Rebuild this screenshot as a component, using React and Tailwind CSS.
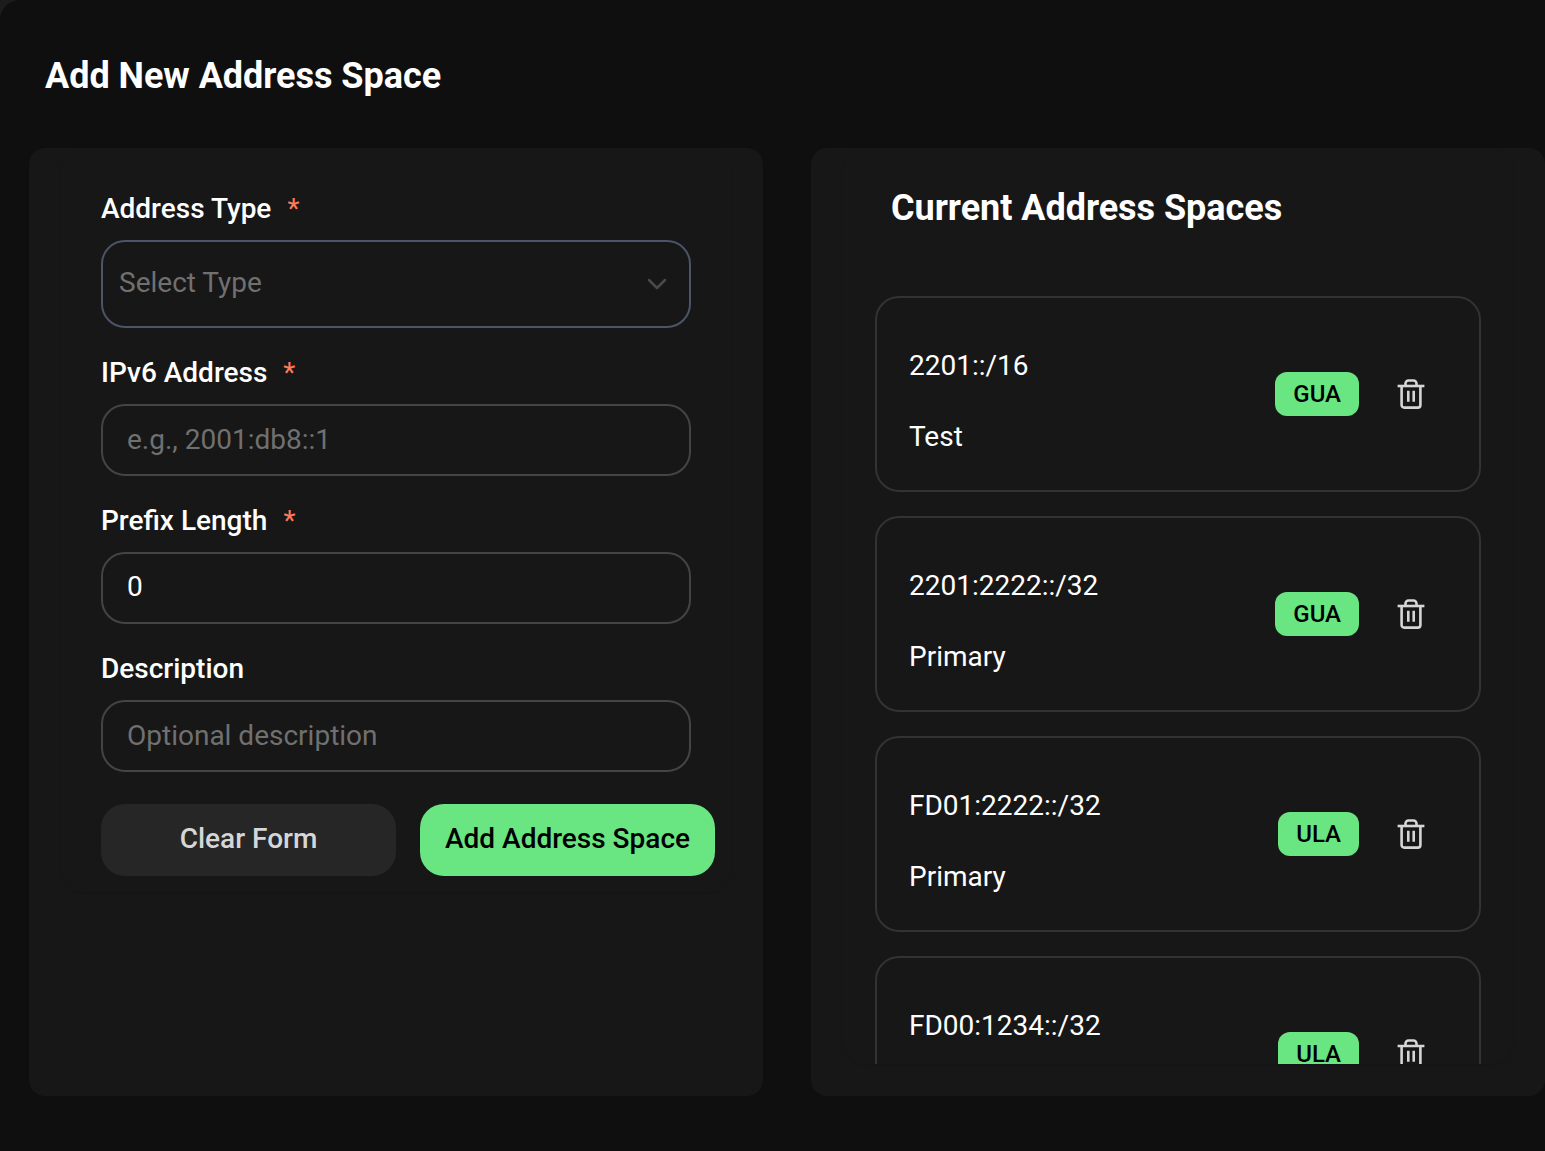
import { useState } from "react";

const initialSpaces = [
  { address: "2201::/16", description: "Test", type: "GUA" },
  { address: "2201:2222::/32", description: "Primary", type: "GUA" },
  { address: "FD01:2222::/32", description: "Primary", type: "ULA" },
  { address: "FD00:1234::/32", description: "", type: "ULA" },
];

const inputClass =
  "block h-[72px] w-full rounded-3xl border-2 border-[#444444] bg-transparent px-6 pb-[3px] text-[28px] text-white placeholder-[#707070] outline-none placeholder-shown:pb-px";

function TrashIcon() {
  return (
    <svg width="32" height="32" viewBox="0 0 32 32" fill="none" stroke="currentColor" strokeWidth="2.6">
      <path d="M2.6 8h26.8" />
      <path d="M10.5 8V5.5a3 3 0 0 1 3-3h5a3 3 0 0 1 3 3V8" />
      <path d="M6.6 8v19a2.6 2.6 0 0 0 2.6 2.6h13.6a2.6 2.6 0 0 0 2.6-2.6V8" />
      <path d="M13.3 12.7v11M18.7 12.7v11" />
    </svg>
  );
}

function Field({ label, required, children }) {
  return (
    <div>
      <label className="mb-3 flex h-10 items-center pt-0.5 text-[28px] font-medium text-white">
        {label}
        {required && <span className="ml-4 font-normal text-[#ff7b5c]">*</span>}
      </label>
      {children}
    </div>
  );
}

function SpaceCard({ space, onDelete }) {
  return (
    <div className="flex h-[196px] shrink-0 items-center justify-between rounded-3xl border-2 border-[#333333] pr-[52px] pl-8">
      <div className="flex flex-col gap-[29px] pt-3.5 text-[28px] leading-[42px] text-white">
        <p>{space.address}</p>
        <p className="min-h-[42px]">{space.description}</p>
      </div>
      <div className="flex items-center gap-9">
        <span className="flex h-11 items-center rounded-xl bg-[#69e582] px-[18px] text-2xl font-medium text-black">
          {space.type}
        </span>
        <button type="button" aria-label="Delete" onClick={onDelete} className="cursor-pointer text-[#d6d6d6]">
          <TrashIcon />
        </button>
      </div>
    </div>
  );
}

export default function App() {
  const [address, setAddress] = useState("");
  const [prefix, setPrefix] = useState("0");
  const [description, setDescription] = useState("");
  const [spaces, setSpaces] = useState(initialSpaces);

  const clearForm = () => {
    setAddress("");
    setPrefix("0");
    setDescription("");
  };

  const addSpace = () => {
    if (!address.trim()) return;

    setSpaces([...spaces, { address: `${address}/${prefix}`, description, type: "GUA" }]);
    clearForm();
  };

  return (
    <div className="h-[1151px] w-[1545px] overflow-hidden bg-[#1c1c1c] font-[Roboto,sans-serif]">
      <div className="h-full rounded-tl-[20px] bg-[#0f0f0f] pt-12 pl-[29px]">
        <h1 className="mb-11 pl-4 text-4xl leading-[56px] font-bold tracking-[-0.03px] text-white">
          Add New Address Space
        </h1>

        <div className="flex gap-12">
          <section className="h-[948px] w-[734px] rounded-2xl bg-[#171717] px-8">
            <div className="flex flex-col gap-6 rounded-3xl px-10 pt-10 pb-4 shadow-[0_1px_3px_rgba(0,0,0,0.08)]">
              <Field label="Address Type" required>
                <button
                  type="button"
                  className="flex h-[88px] w-full items-center justify-between rounded-3xl border-2 border-[#4a5568] pr-5 pl-4 text-[28px] text-[#707070]"
                >
                  <span className="pb-0.5">Select Type</span>
                  <svg width="24" height="24" viewBox="0 0 24 24" fill="none" stroke="#4a4a4a" strokeWidth="2.5" strokeLinecap="round" strokeLinejoin="round">
                    <path d="M4 8l8 8 8-8" />
                  </svg>
                </button>
              </Field>
              <Field label="IPv6 Address" required>
                <input
                  value={address}
                  onChange={(e) => setAddress(e.target.value)}
                  placeholder="e.g., 2001:db8::1"
                  className={inputClass}
                />
              </Field>
              <Field label="Prefix Length" required>
                <input value={prefix} onChange={(e) => setPrefix(e.target.value)} className={inputClass} />
              </Field>
              <Field label="Description">
                <input
                  value={description}
                  onChange={(e) => setDescription(e.target.value)}
                  placeholder="Optional description"
                  className={inputClass}
                />
              </Field>
              <div className="mt-2 -mr-6 flex gap-6 text-[28px] font-medium">
                <button
                  type="button"
                  onClick={clearForm}
                  className="h-[72px] flex-1 cursor-pointer rounded-3xl bg-[#262626] pb-[3px] text-[#d6d6d6]"
                >
                  Clear Form
                </button>
                <button
                  type="button"
                  onClick={addSpace}
                  className="h-[72px] flex-1 cursor-pointer rounded-3xl bg-[#69e582] pb-[3px] whitespace-nowrap text-black"
                >
                  Add Address Space
                </button>
              </div>
            </div>
          </section>

          <section className="h-[948px] w-[734px] rounded-2xl bg-[#171717] px-8 pb-8">
            <div className="flex h-full flex-col overflow-hidden rounded-3xl px-8 pt-8 shadow-[0_1px_3px_rgba(0,0,0,0.08)]">
              <h2 className="mb-[60px] pl-4 text-4xl leading-[56px] font-bold tracking-[-0.03px] text-white">
                Current Address Spaces
              </h2>
              <div className="flex flex-col gap-6">
                {spaces.map((space, index) => (
                  <SpaceCard
                    key={space.address}
                    space={space}
                    onDelete={() => setSpaces(spaces.filter((_, i) => i !== index))}
                  />
                ))}
              </div>
            </div>
          </section>
        </div>
      </div>
    </div>
  );
}
